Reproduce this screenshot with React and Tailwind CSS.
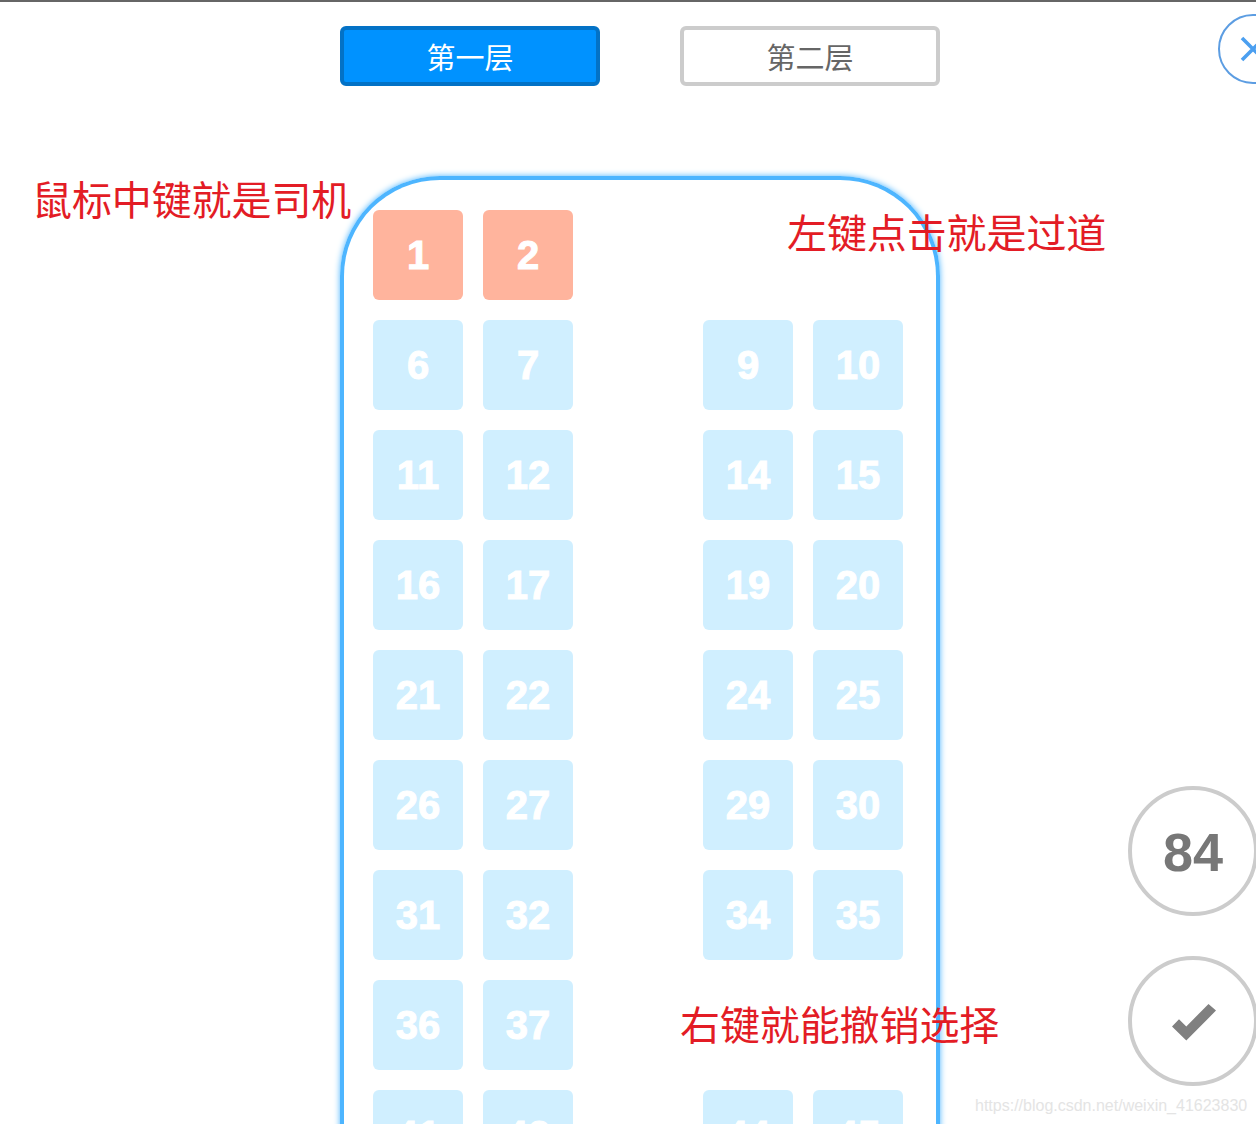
const rows = [
  [1, 2, null, null],
  [6, 7, 9, 10],
  [11, 12, 14, 15],
  [16, 17, 19, 20],
  [21, 22, 24, 25],
  [26, 27, 29, 30],
  [31, 32, 34, 35],
  [36, 37, null, null],
  [41, 42, 44, 45],
];

function Seat({ num, driver }) {
  if (num === null) return <div className="w-[90px] h-[90px]" />;
  return (
    <div
      className={`w-[90px] h-[90px] rounded-[6px] flex items-center justify-center text-white text-[40px] font-bold [-webkit-text-stroke:1px_white] ${
        driver ? "bg-[#ffb49d]" : "bg-[#d0efff]"
      }`}
    >
      {num}
    </div>
  );
}

function Note({ className, children }) {
  return (
    <div
      className={`absolute text-[40px] leading-[48px] whitespace-nowrap text-[#e31c25] font-normal tracking-[-0.1px] ${className}`}
    >
      {children}
    </div>
  );
}

function App() {
  return (
    <div className="relative w-[1256px] h-[1124px] overflow-hidden bg-white border-t-2 border-[#666666] font-['Liberation_Sans','Noto_Sans_CJK_SC',sans-serif]">
      <div className="flex">
        <div className="w-[340px] shrink-0" />

        {/* middle column: floor tabs + bus */}
        <div className="w-[600px] shrink-0">
          <div className="flex justify-between w-[600px] pt-6">
            <button className="w-[260px] h-[60px] rounded-[6px] border-4 border-[#0372c6] bg-[#0092ff] text-white text-[29px] pt-2">
              第一层
            </button>
            <button className="w-[260px] h-[60px] rounded-[6px] border-4 border-[#cccccc] bg-white text-[#666666] text-[29px] pt-2">
              第二层
            </button>
          </div>
          <div className="mt-[90px] w-[600px] h-[1100px] rounded-t-[100px] border-4 border-b-0 border-[#4db5ff] shadow-[0_0_6px_#4db5ff] pt-[30px] pl-[29px]">
            <div className="flex flex-col gap-5">
              {rows.map((row, i) => (
                <div key={i} className="flex">
                  <Seat num={row[0]} driver={i === 0} />
                  <div className="w-5" />
                  <Seat num={row[1]} driver={i === 0} />
                  <div className="w-[130px]" />
                  <Seat num={row[2]} />
                  <div className="w-5" />
                  <Seat num={row[3]} />
                </div>
              ))}
            </div>
          </div>
        </div>

        {/* right column: close, count, confirm */}
        <div className="flex-1 min-w-0">
          <div className="ml-[278px] mt-3 w-[70px] h-[70px] rounded-full border-2 border-[#5c9de2] flex items-center justify-center">
            <svg width="26" height="26" viewBox="0 0 26 26" fill="none" stroke="#4b9ff0" strokeWidth="3.6">
              <path d="M2 2L24 24M24 2L2 24" />
            </svg>
          </div>
          <div className="ml-[188px] mt-[702px] w-[130px] h-[130px] rounded-full border-4 border-[#cccccc] flex items-center justify-center pt-0.5 text-[#777777] text-[54px] font-bold">
            84
          </div>
          <div className="ml-[188px] mt-10 w-[130px] h-[130px] rounded-full border-4 border-[#cccccc] flex items-center justify-center pl-0.5 pt-0.5">
            <svg width="46" height="38" viewBox="0 0 46 38" fill="#808080">
              <path d="M1 23.5L8 16.2L15.3 23.4L37.5 1L45 7.6L15.3 37.5Z" />
            </svg>
          </div>
        </div>
      </div>

      <Note className="left-[32px] top-[175px]">鼠标中键就是司机</Note>
      <Note className="left-[787px] top-[208px]">左键点击就是过道</Note>
      <Note className="left-[680px] top-[1000px]">右键就能撤销选择</Note>

      <div className="absolute left-[975px] top-[1094px] text-[16px] leading-5 text-[#e4e4e4] whitespace-nowrap">
        https://blog.csdn.net/weixin_41623830
      </div>
    </div>
  );
}

export default App;
